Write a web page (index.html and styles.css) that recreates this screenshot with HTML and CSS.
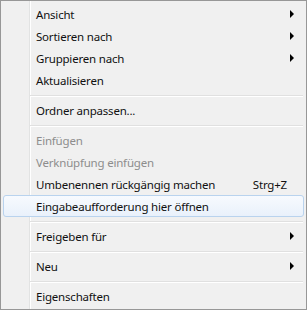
FILE: index.html
```html
<!doctype html>
<html lang="de">
  <head>
    <meta charset="UTF-8" />
    <title>Kontextmenü</title>
    <link rel="stylesheet" href="styles.css">
  </head>
  <body>
    <div class="menu">
        <div class="item">Ansicht<span class="arrow"></span></div>
        <div class="item">Sortieren nach<span class="arrow"></span></div>
        <div class="item">Gruppieren nach<span class="arrow"></span></div>
        <div class="item">Aktualisieren</div>
        <div class="sep"></div>
        <div class="item">Ordner anpassen...</div>
        <div class="sep"></div>
        <div class="item disabled">Einfügen</div>
        <div class="item disabled">Verknüpfung einfügen</div>
        <div class="item">Umbenennen rückgängig machen<span class="key">Strg+Z</span></div>
        <div class="item hover">Eingabeaufforderung hier öffnen</div>
        <div class="sep"></div>
        <div class="item">Freigeben für<span class="arrow"></span></div>
        <div class="sep"></div>
        <div class="item">Neu<span class="arrow"></span></div>
        <div class="sep"></div>
        <div class="item">Eigenschaften</div>
    </div>
  </body>
</html>
```

FILE: styles.css
```css
* {
    box-sizing: border-box;
}

body {
    margin: 0;
    padding: 0;
    font-family: "Noto Sans", "Open Sans", sans-serif;
    font-size: 11.5px;
    letter-spacing: -0.2px;
    color: #111;
}

.menu {
    width: 307px;
    height: 310px;
    padding: 2px;
    border: 1px solid #979797;
    background:
        linear-gradient(to right, transparent 28px, #e2e3e3 28px, #e2e3e3 29px, #fff 29px, #fff 30px, transparent 30px),
        #f0f0f0;
}

.item {
    display: flex;
    align-items: center;
    height: 22px;
    padding-left: 32px;
    border: 1px solid transparent;
    border-radius: 3px;
    white-space: nowrap;
}

.item.disabled {
    color: #8d8d8d;
}

.item.hover {
    border-color: #b9d3ee;
    background: linear-gradient(to bottom, #f7fafe, #e9f1fb);
}

.arrow {
    margin-left: auto;
    margin-right: 9px;
    width: 0;
    height: 0;
    border-left: 4px solid #000;
    border-top: 4px solid transparent;
    border-bottom: 4px solid transparent;
}

.key {
    margin-left: auto;
    margin-right: 16px;
}

.sep {
    height: 8px;
    margin-left: 27px;
    margin-right: 1px;
    padding-top: 4px;
}

.sep::before {
    content: "";
    display: block;
    height: 1px;
    background: #e0e0e0;
    border-bottom: 1px solid #fff;
    box-sizing: content-box;
}
```
